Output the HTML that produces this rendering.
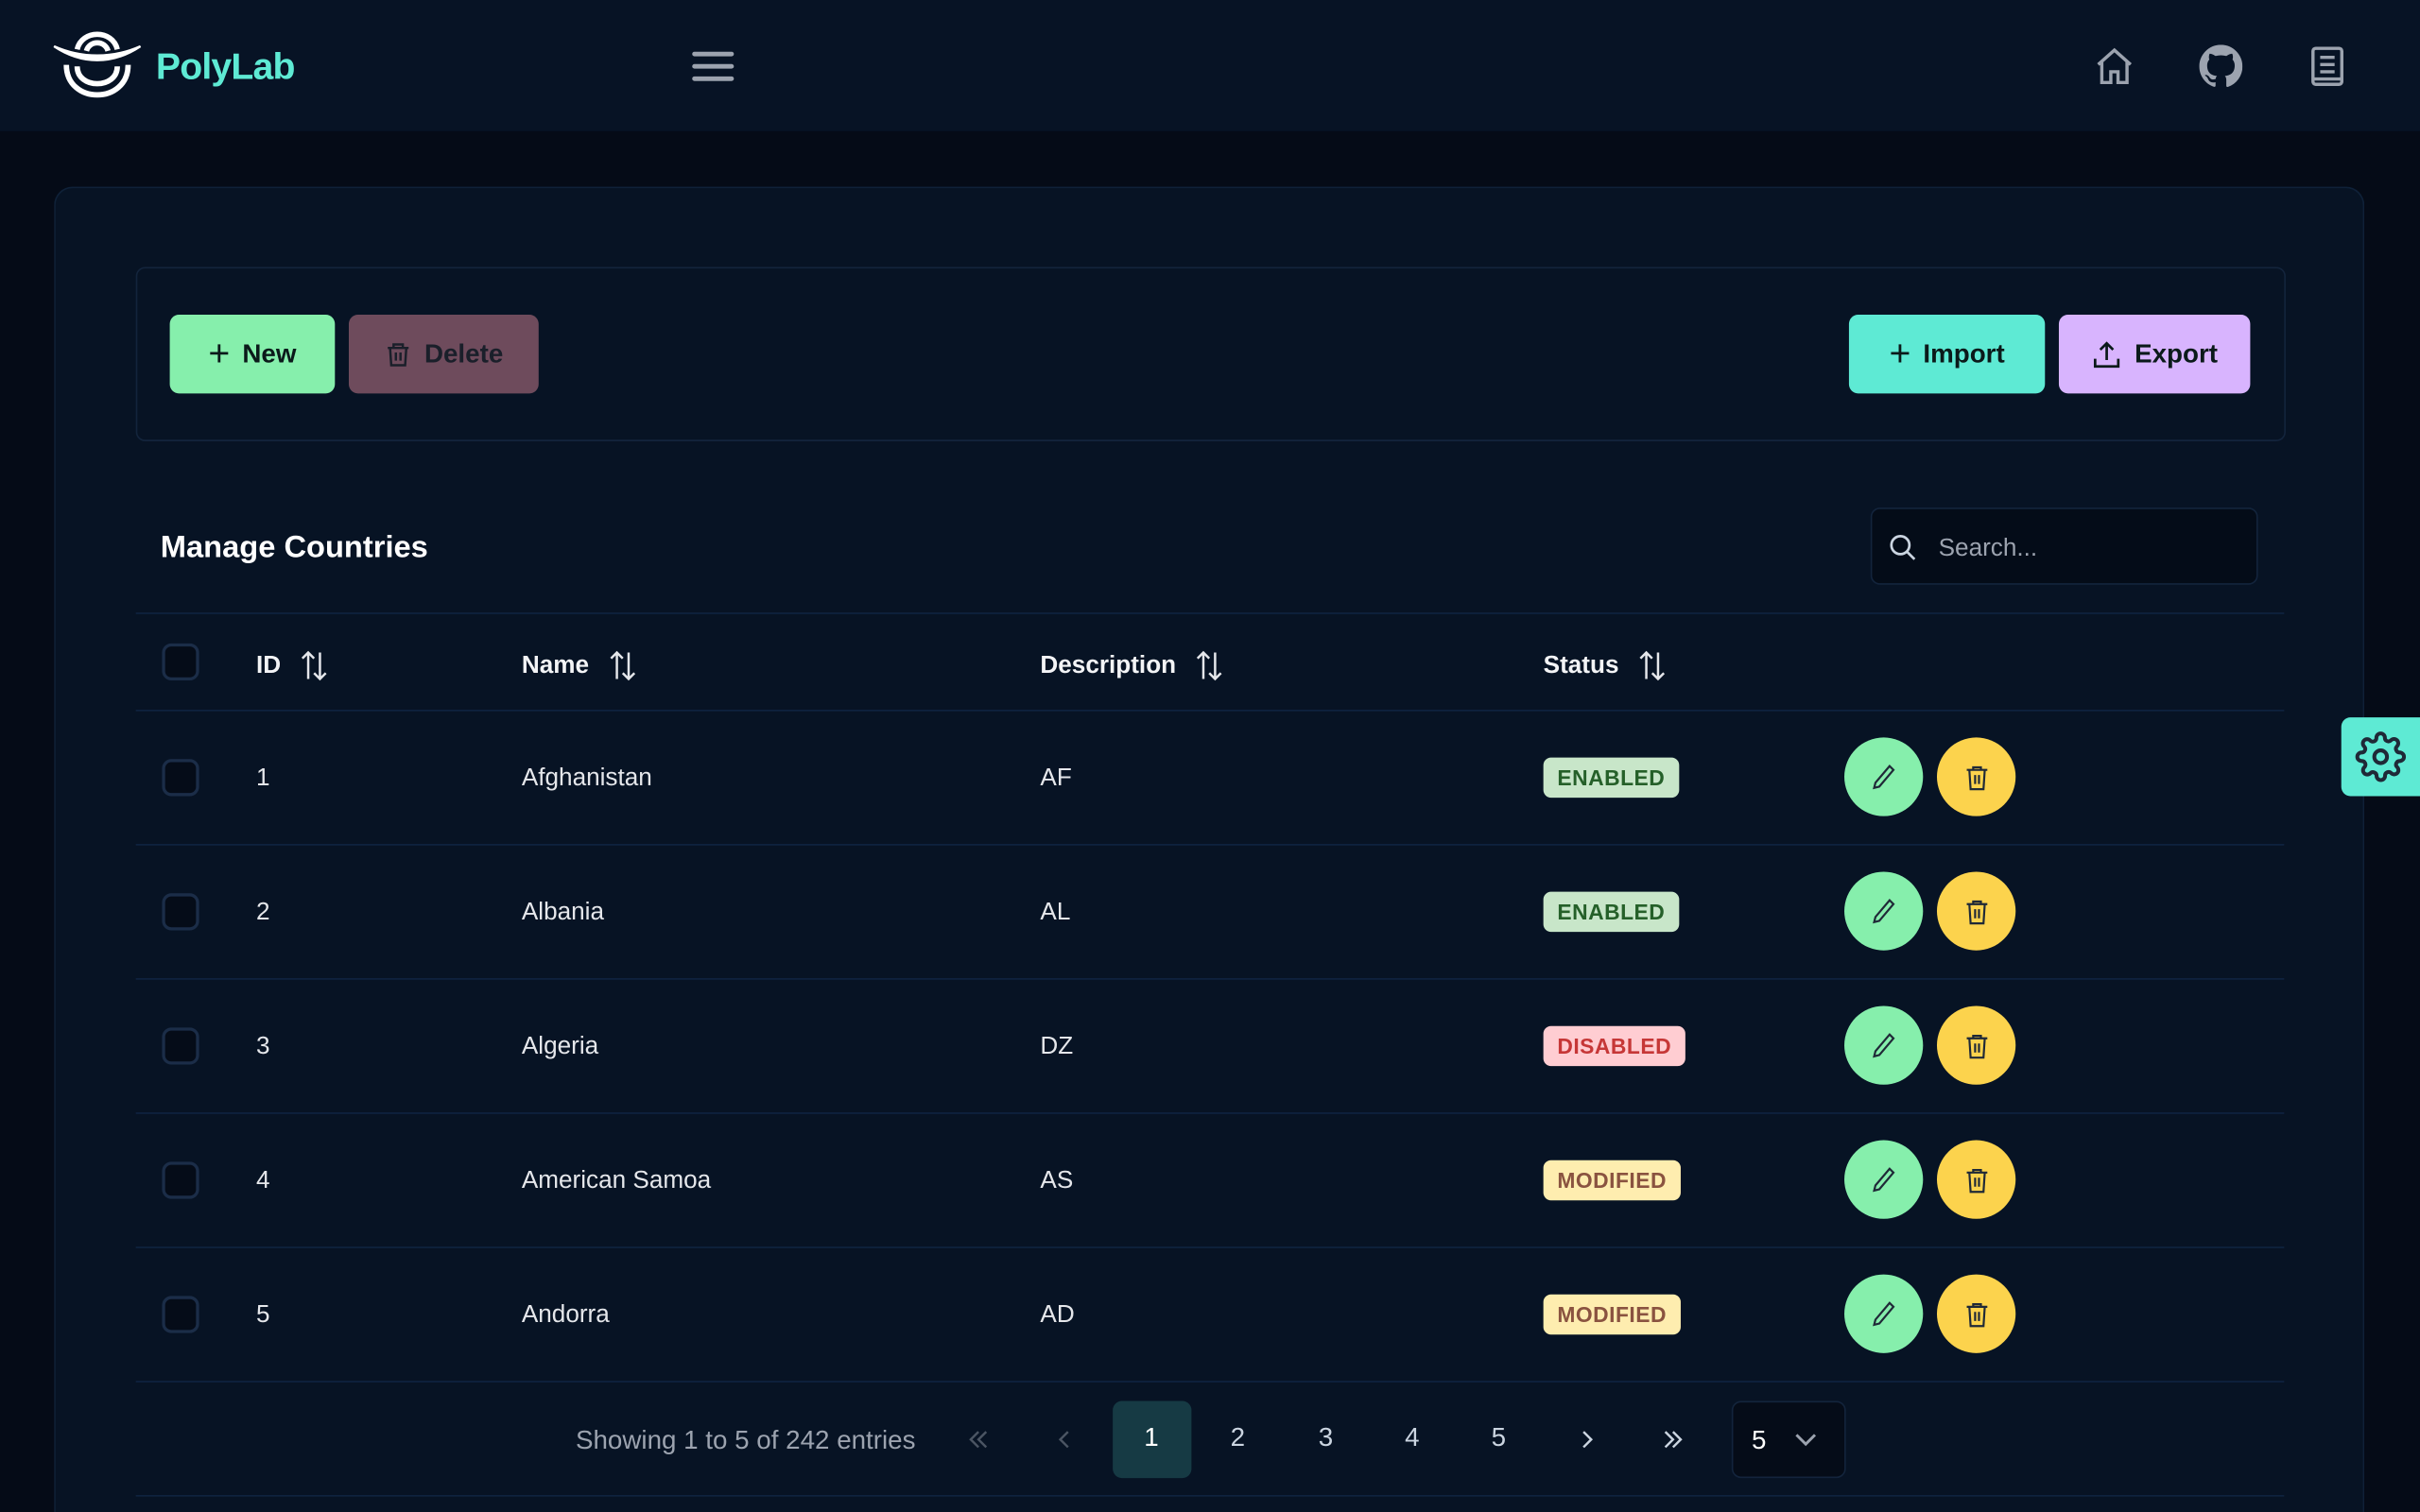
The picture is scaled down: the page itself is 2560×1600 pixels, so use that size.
<!DOCTYPE html>
<html><head><meta charset="utf-8"><style>
html,body{margin:0;padding:0;background:#050b17;width:2560px;height:1600px;overflow:hidden}
#w{position:absolute;left:0;top:0;width:1568px;height:980px;overflow:hidden;transform:scale(1.632653);transform-origin:0 0;font-family:"Liberation Sans",sans-serif;color:#e5e7eb}
.a{position:absolute}
.hdr{left:0;top:0;width:1568px;height:85px;background:#071325}
.card{left:35px;top:121px;width:1497px;height:859px;background:#071324;border:1px solid #0f2138;border-bottom:none;border-radius:12px 12px 0 0;box-sizing:border-box}
.tb{left:88px;top:173px;width:1391px;height:111px;border:1px solid #13243c;border-radius:6px}
.btn{position:absolute;top:204px;height:51px;border-radius:6px;display:flex;align-items:center;justify-content:center;gap:8px;font-weight:bold;font-size:17px;color:#0b1a1a}
.hl{position:absolute;left:88px;width:1392px;height:1px;background:#0f2340}
.th{position:absolute;top:421px;font-weight:bold;font-size:16px;color:#f3f4f6;display:flex;align-items:center;gap:12px}
.cb{position:absolute;left:105px;width:24px;height:24px;border:2px solid #1b2d48;border-radius:6px;background:#050c18;box-sizing:border-box}
.td{position:absolute;font-size:16px;color:#e5e7eb}
.bd{position:absolute;left:1000px;height:26px;border-radius:5px;font-weight:bold;font-size:14px;letter-spacing:.3px;display:flex;align-items:center;padding:0 9px}
.ci{position:absolute;width:51px;height:51px;border-radius:50%;display:flex;align-items:center;justify-content:center}
.pg{position:absolute;top:922px;font-size:17px;color:#cbd5e1;width:50px;text-align:center}
.pa{position:absolute;top:926px}
</style></head><body><div id="w">
<div class="a hdr"></div>
<svg class="a" style="left:33px;top:20px" width="60" height="46" viewBox="0 0 60 46" fill="none" stroke="#fff" stroke-width="3.5">
<path d="M17 12 C20 -1 40 -1 43 12"/><path d="M23 13 C25 6 35 6 37 13"/>
<path d="M2 10 C20 22 40 22 58 10 C40 18 20 18 2 10Z" fill="#fff" stroke-width="1.5"/>
<path d="M10 22 C10 48 50 48 50 22"/><path d="M17 23 C17 38 43 38 43 23"/></svg>
<div class="a" style="left:101px;top:30px;font-size:24px;font-weight:bold;color:#5eead4;letter-spacing:-0.5px">PolyLab</div>
<svg class="a" style="left:448px;top:32px" width="28" height="22"><g stroke="#9ca3af" stroke-width="3" stroke-linecap="round"><path d="M2 3H26M2 11H26M2 19H26"/></g></svg>
<svg class="a" style="left:1356px;top:29px" width="28" height="28" viewBox="0 0 24 24" fill="none" stroke="#9ca3af" stroke-width="1.8"><path d="M3 11L12 3l9 8M5 9v12h5v-6h4v6h5V9"/></svg>
<svg class="a" style="left:1425px;top:29px" width="28" height="28" viewBox="0 0 16 16" fill="#9ca3af"><path d="M8 0C3.58 0 0 3.58 0 8c0 3.54 2.29 6.53 5.47 7.59.4.07.55-.17.55-.38v-1.33c-2.23.48-2.7-1.07-2.7-1.07-.36-.92-.89-1.17-.89-1.17-.73-.5.06-.49.06-.49.8.06 1.23.83 1.23.83.71 1.22 1.87.87 2.33.66.07-.52.28-.87.5-1.07-1.78-.2-3.64-.89-3.64-3.95 0-.87.31-1.59.82-2.15-.08-.2-.36-1.02.08-2.12 0 0 .67-.21 2.2.82a7.6 7.6 0 014 0c1.53-1.04 2.2-.82 2.2-.82.44 1.1.16 1.92.08 2.12.51.56.82 1.27.82 2.15 0 3.07-1.87 3.75-3.65 3.95.29.25.54.73.54 1.48v2.2c0 .21.15.46.55.38A8 8 0 0016 8c0-4.42-3.58-8-8-8z"/></svg>
<svg class="a" style="left:1494px;top:29px" width="28" height="28" viewBox="0 0 24 24" fill="none" stroke="#9ca3af" stroke-width="1.8"><rect x="4" y="2" width="16" height="20" rx="1.5"/><path d="M8 7h8M8 11h8M8 15h8M4 19h16"/></svg>
<div class="a card"></div>
<div class="a tb"></div>
<div class="btn" style="left:110px;width:107px;background:#86efac"><span style="font-size:24px;font-weight:normal">+</span>New</div>
<div class="btn" style="left:226px;width:123px;background:#6e4b5c;color:#1a1f2a"><svg width="18" height="18" viewBox="0 0 24 24" fill="none" stroke="#1a1f2a" stroke-width="2"><path d="M3 6h18M8 6V3h8v3M5 6l1 15h12l1-15M10 10v7M14 10v7"/></svg>Delete</div>
<div class="btn" style="left:1198px;width:127px;background:#5eead4"><span style="font-size:24px;font-weight:normal">+</span>Import</div>
<div class="btn" style="left:1334px;width:124px;background:#d8b4fe"><svg width="20" height="20" viewBox="0 0 24 24" fill="none" stroke="#0b1a1a" stroke-width="2"><path d="M12 16V3M7 8l5-5 5 5M3 15v6h18v-6"/></svg>Export</div>
<div class="a" style="left:104px;top:344px;font-size:20px;font-weight:bold;color:#fff">Manage Countries</div>
<div class="a" style="left:1212px;top:329px;width:251px;height:50px;background:#040c18;border:1px solid #13243c;border-radius:6px;box-sizing:border-box"></div>
<svg class="a" style="left:1223px;top:345px" width="20" height="20" viewBox="0 0 24 24" fill="none" stroke="#cbd5e1" stroke-width="2"><circle cx="10" cy="10" r="7"/><path d="M15 15l6 6"/></svg>
<div class="a" style="left:1256px;top:347px;font-size:16px;color:#9ca3af">Search...</div>
<div class="hl" style="top:397px"></div><div class="hl" style="top:460px"></div>
<svg width="0" height="0" style="position:absolute"><defs>
<symbol id="so" viewBox="0 0 20 22"><path d="M6 20V2M2 6l4-4 4 4M14 2v18M10 16l4 4 4-4" fill="none" stroke="#e5e7eb" stroke-width="1.6"/></symbol>
<symbol id="pe" viewBox="0 0 24 24"><path d="M16 3l3 3L8 19l-4 1 1-4z" fill="none" stroke="#1f2937" stroke-width="1.6"/></symbol>
<symbol id="tr" viewBox="0 0 24 24"><path d="M4 6h16M9 6V4h6v2M6 6l1 15h10l1-15M10.5 10v7M13.5 10v7" fill="none" stroke="#1f2937" stroke-width="1.6"/></symbol></defs></svg>
<div class="cb" style="top:417px"></div>
<div class="th" style="left:166px">ID <svg width="19" height="21"><use href="#so"/></svg></div>
<div class="th" style="left:338px">Name <svg width="19" height="21"><use href="#so"/></svg></div>
<div class="th" style="left:674px">Description <svg width="19" height="21"><use href="#so"/></svg></div>
<div class="th" style="left:1000px">Status <svg width="19" height="21"><use href="#so"/></svg></div>

<div class="cb" style="top:492px"></div><div class="td" style="left:166px;top:496px">1</div><div class="td" style="left:338px;top:496px">Afghanistan</div><div class="td" style="left:674px;top:496px">AF</div>
<div class="bd" style="top:491px;background:#c8e6c9;color:#256029">ENABLED</div>
<div class="hl" style="top:547px"></div>
<div class="cb" style="top:579px"></div><div class="td" style="left:166px;top:583px">2</div><div class="td" style="left:338px;top:583px">Albania</div><div class="td" style="left:674px;top:583px">AL</div>
<div class="bd" style="top:578px;background:#c8e6c9;color:#256029">ENABLED</div>
<div class="hl" style="top:634px"></div>
<div class="cb" style="top:666px"></div><div class="td" style="left:166px;top:670px">3</div><div class="td" style="left:338px;top:670px">Algeria</div><div class="td" style="left:674px;top:670px">DZ</div>
<div class="bd" style="top:665px;background:#ffcdd2;color:#c63737">DISABLED</div>
<div class="hl" style="top:721px"></div>
<div class="cb" style="top:753px"></div><div class="td" style="left:166px;top:757px">4</div><div class="td" style="left:338px;top:757px">American Samoa</div><div class="td" style="left:674px;top:757px">AS</div>
<div class="bd" style="top:752px;background:#feedaf;color:#8a5340">MODIFIED</div>
<div class="hl" style="top:808px"></div>
<div class="cb" style="top:840px"></div><div class="td" style="left:166px;top:844px">5</div><div class="td" style="left:338px;top:844px">Andorra</div><div class="td" style="left:674px;top:844px">AD</div>
<div class="bd" style="top:839px;background:#feedaf;color:#8a5340">MODIFIED</div>
<div class="hl" style="top:895px"></div>

<div class="ci" style="left:1195px;top:478px;background:#86efac"><svg width="20" height="20"><use href="#pe"/></svg></div>
<div class="ci" style="left:1255px;top:478px;background:#fcd34d"><svg width="20" height="20"><use href="#tr"/></svg></div>
<div class="ci" style="left:1195px;top:565px;background:#86efac"><svg width="20" height="20"><use href="#pe"/></svg></div>
<div class="ci" style="left:1255px;top:565px;background:#fcd34d"><svg width="20" height="20"><use href="#tr"/></svg></div>
<div class="ci" style="left:1195px;top:652px;background:#86efac"><svg width="20" height="20"><use href="#pe"/></svg></div>
<div class="ci" style="left:1255px;top:652px;background:#fcd34d"><svg width="20" height="20"><use href="#tr"/></svg></div>
<div class="ci" style="left:1195px;top:739px;background:#86efac"><svg width="20" height="20"><use href="#pe"/></svg></div>
<div class="ci" style="left:1255px;top:739px;background:#fcd34d"><svg width="20" height="20"><use href="#tr"/></svg></div>
<div class="ci" style="left:1195px;top:826px;background:#86efac"><svg width="20" height="20"><use href="#pe"/></svg></div>
<div class="ci" style="left:1255px;top:826px;background:#fcd34d"><svg width="20" height="20"><use href="#tr"/></svg></div>

<div class="a" style="left:373px;top:924px;font-size:17px;color:#9ca3af">Showing 1 to 5 of 242 entries</div>
<svg class="pa" style="left:627px" width="14" height="14" viewBox="0 0 14 14" fill="none" stroke="#4b5563" stroke-width="1.5"><path d="M7 2L2 7l5 5M12 2L7 7l5 5"/></svg>
<svg class="pa" style="left:685px" width="10" height="14" viewBox="0 0 10 14" fill="none" stroke="#4b5563" stroke-width="1.5"><path d="M7 2L2 7l5 5"/></svg>
<div class="a" style="left:721px;top:908px;width:51px;height:50px;background:#163a44;border-radius:6px"></div>
<div class="pg" style="left:721px;color:#fff">1</div>
<div class="pg" style="left:777px">2</div><div class="pg" style="left:834px">3</div><div class="pg" style="left:890px">4</div><div class="pg" style="left:946px">5</div>
<svg class="pa" style="left:1023px" width="10" height="14" viewBox="0 0 10 14" fill="none" stroke="#cbd5e1" stroke-width="1.5"><path d="M3 2l5 5-5 5"/></svg>
<svg class="pa" style="left:1077px" width="14" height="14" viewBox="0 0 14 14" fill="none" stroke="#cbd5e1" stroke-width="1.5"><path d="M2 2l5 5-5 5M7 2l5 5-5 5"/></svg>
<div class="a" style="left:1122px;top:908px;width:74px;height:50px;background:#050c18;border:1px solid #13243c;border-radius:6px;box-sizing:border-box"></div>
<div class="a" style="left:1135px;top:924px;font-size:17px;color:#fff">5</div>
<svg class="a" style="left:1162px;top:925px" width="16" height="16" viewBox="0 0 16 16"><path d="M2 5l6 6 6-6" fill="none" stroke="#9ca3af" stroke-width="1.8"/></svg>
<div class="hl" style="top:969px"></div>
<div class="a" style="left:1517px;top:465px;width:51px;height:51px;background:#5eead4;border-radius:6px 0 0 6px"></div>
<svg class="a" style="left:1526px;top:474px" width="33" height="33" viewBox="0 0 24 24" fill="none" stroke="#1f2937" stroke-width="1.8"><circle cx="12" cy="12" r="3"/><path d="M19.4 15a1.65 1.65 0 00.33 1.82l.06.06a2 2 0 11-2.83 2.83l-.06-.06a1.65 1.65 0 00-1.82-.33 1.65 1.65 0 00-1 1.51V21a2 2 0 11-4 0v-.09A1.65 1.65 0 009 19.4a1.65 1.65 0 00-1.82.33l-.06.06a2 2 0 11-2.83-2.83l.06-.06A1.65 1.65 0 004.68 15a1.65 1.65 0 00-1.51-1H3a2 2 0 110-4h.09A1.65 1.65 0 004.6 9a1.65 1.65 0 00-.33-1.82l-.06-.06a2 2 0 112.83-2.83l.06.06A1.65 1.65 0 009 4.68a1.65 1.65 0 001-1.51V3a2 2 0 114 0v.09a1.65 1.65 0 001 1.51 1.65 1.65 0 001.82-.33l.06-.06a2 2 0 112.83 2.83l-.06.06A1.65 1.65 0 0019.4 9a1.65 1.65 0 001.51 1H21a2 2 0 110 4h-.09a1.65 1.65 0 00-1.51 1z"/></svg>
</div></body></html>
